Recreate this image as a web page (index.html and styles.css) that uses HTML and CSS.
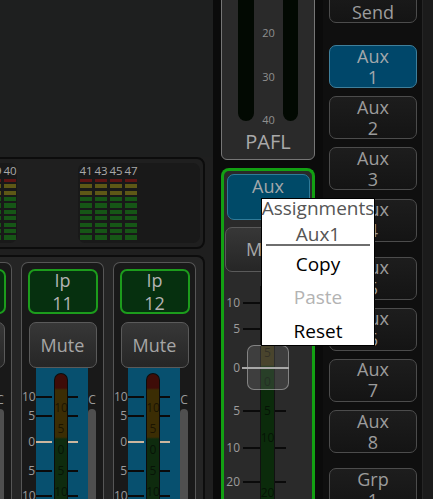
FILE: index.html
```html
<!DOCTYPE html>
<html>
<head>
<meta charset="utf-8">
<link rel="stylesheet" href="styles.css">
</head>
<body>
<div class="app">
  <div class="left">
    <div class="empty"></div>
    <div class="meters">
      <div class="mgroup g1">
        <div class="mcol"><span class="ml">39</span><div class="segs"><i class="sr"></i><i class="sy"></i><i class="sy"></i><i class="sg"></i><i class="sg"></i><i class="sg"></i><i class="sg"></i><i class="sg"></i><i class="sg"></i><i class="sg"></i></div></div>
        <div class="mcol"><span class="ml">40</span><div class="segs"><i class="sr"></i><i class="sy"></i><i class="sy"></i><i class="sg"></i><i class="sg"></i><i class="sg"></i><i class="sg"></i><i class="sg"></i><i class="sg"></i><i class="sg"></i></div></div>
      </div>
      <div class="mgroup g2">
        <div class="mcol"><span class="ml">41</span><div class="segs"><i class="sr"></i><i class="sy"></i><i class="sy"></i><i class="sg"></i><i class="sg"></i><i class="sg"></i><i class="sg"></i><i class="sg"></i><i class="sg"></i><i class="sg"></i></div></div>
        <div class="mcol"><span class="ml">43</span><div class="segs"><i class="sr"></i><i class="sy"></i><i class="sy"></i><i class="sg"></i><i class="sg"></i><i class="sg"></i><i class="sg"></i><i class="sg"></i><i class="sg"></i><i class="sg"></i></div></div>
        <div class="mcol"><span class="ml">45</span><div class="segs"><i class="sr"></i><i class="sy"></i><i class="sy"></i><i class="sg"></i><i class="sg"></i><i class="sg"></i><i class="sg"></i><i class="sg"></i><i class="sg"></i><i class="sg"></i></div></div>
        <div class="mcol"><span class="ml">47</span><div class="segs"><i class="sr"></i><i class="sy"></i><i class="sy"></i><i class="sg"></i><i class="sg"></i><i class="sg"></i><i class="sg"></i><i class="sg"></i><i class="sg"></i><i class="sg"></i></div></div>
      </div>
    </div>
    <div class="chpanel">
      <div class="strip">
        <div class="ipbtn"><span>Ip</span><span>10</span></div>
        <div class="mute">Mute</div>
        <div class="fader">
          <div class="blue"></div>
          <div class="meter"><span class="mn">10</span><span class="mn">5</span><span class="mn">0</span><span class="mn">5</span><span class="mn">10</span></div>
          <div class="pan"><span class="c">C</span><div class="panbar"></div></div>
          <span class="n r2">10</span><i class="tl r2"></i><i class="tr r2"></i>
          <span class="n r4">5</span><i class="tl r4"></i><i class="tr r4"></i>
          <span class="n r6">0</span><i class="tl r6 z"></i><i class="tr r6 z"></i>
          <span class="n r8">5</span><i class="tl r8"></i><i class="tr r8"></i>
          <span class="n r10">10</span><i class="tl r10"></i><i class="tr r10"></i>
        </div>
      </div>
      <div class="strip">
        <div class="ipbtn"><span>Ip</span><span>11</span></div>
        <div class="mute">Mute</div>
        <div class="fader">
          <div class="blue"></div>
          <div class="meter"><span class="mn">10</span><span class="mn">5</span><span class="mn">0</span><span class="mn">5</span><span class="mn">10</span></div>
          <div class="pan"><span class="c">C</span><div class="panbar"></div></div>
          <span class="n r2">10</span><i class="tl r2"></i><i class="tr r2"></i>
          <span class="n r4">5</span><i class="tl r4"></i><i class="tr r4"></i>
          <span class="n r6">0</span><i class="tl r6 z"></i><i class="tr r6 z"></i>
          <span class="n r8">5</span><i class="tl r8"></i><i class="tr r8"></i>
          <span class="n r10">10</span><i class="tl r10"></i><i class="tr r10"></i>
        </div>
      </div>
      <div class="strip">
        <div class="ipbtn"><span>Ip</span><span>12</span></div>
        <div class="mute">Mute</div>
        <div class="fader">
          <div class="blue"></div>
          <div class="meter"><span class="mn">10</span><span class="mn">5</span><span class="mn">0</span><span class="mn">5</span><span class="mn">10</span></div>
          <div class="pan"><span class="c">C</span><div class="panbar"></div></div>
          <span class="n r2">10</span><i class="tl r2"></i><i class="tr r2"></i>
          <span class="n r4">5</span><i class="tl r4"></i><i class="tr r4"></i>
          <span class="n r6">0</span><i class="tl r6 z"></i><i class="tr r6 z"></i>
          <span class="n r8">5</span><i class="tl r8"></i><i class="tr r8"></i>
          <span class="n r10">10</span><i class="tl r10"></i><i class="tr r10"></i>
        </div>
      </div>
    </div>
  </div>

  <div class="sep"></div>

  <div class="mid">
    <div class="pafl">
      <div class="pafl-top">
        <div class="pbar"></div>
        <div class="pscale"><span>20</span><span>30</span><span>40</span></div>
        <div class="pbar pbar2"></div>
      </div>
      <div class="plabel">PAFL</div>
    </div>
    <div class="aux">
      <div class="auxbtn"><span>Aux</span><span>1</span></div>
      <div class="mute amute">Mute</div>
      <div class="afader">
        <div class="ameter"><span class="mn">5</span><span class="mn">0</span><span class="mn">5</span><span class="mn">10</span><span class="mn">20</span></div>
        <span class="an r2">10</span><i class="atl r2"></i><i class="atr r2"></i>
        <span class="an r4">5</span><i class="atl r4"></i><i class="atr r4"></i>
        <span class="an r6">0</span><i class="atl r6 az"></i><i class="atr r6 az"></i>
        <span class="an r8">5</span><i class="atl r8"></i><i class="atr r8"></i>
        <span class="an r10">10</span><i class="atl r10"></i><i class="atr r10"></i>
        <span class="an r12">20</span><i class="atl r12"></i><i class="atr r12"></i>
        <div class="knob"></div>
      </div>
    </div>
  </div>

  <div class="sep"></div>

  <div class="right">
    <div class="btns">
      <div class="rbtn send"><span>Main</span><span>Send</span></div>
      <div class="rbtn active gap22"><span>Aux</span><span>1</span></div>
      <div class="rbtn"><span>Aux</span><span>2</span></div>
      <div class="rbtn"><span>Aux</span><span>3</span></div>
      <div class="rbtn"><span>Aux</span><span>4</span></div>
      <div class="rbtn gap15"><span>Aux</span><span>5</span></div>
      <div class="rbtn"><span>Aux</span><span>6</span></div>
      <div class="rbtn"><span>Aux</span><span>7</span></div>
      <div class="rbtn"><span>Aux</span><span>8</span></div>
      <div class="rbtn gap15"><span>Grp</span><span>1</span></div>
    </div>
    <div class="rail"></div>
  </div>

  <div class="popup">
    <div class="ptitle">Assignments</div>
    <div class="psub">Aux1</div>
    <div class="psep"></div>
    <div class="pitem first">Copy</div>
    <div class="pitem dis">Paste</div>
    <div class="pitem">Reset</div>
  </div>
</div>
</body>
</html>
```

FILE: styles.css
```css
* { box-sizing: border-box; margin: 0; padding: 0; }
html, body { width: 433px; height: 499px; overflow: hidden; background: #0b0b0b; }
body { font-family: "Open Sans", "Noto Sans", sans-serif; }
i { display: block; }

.app { position: relative; display: flex; width: 433px; height: 499px; overflow: hidden; }

/* ---------- left area ---------- */
.left { width: 213px; flex: none; background: #1f1f1f; display: flex; flex-direction: column; overflow: hidden; }
.empty { height: 157px; flex: none; background: #1e1f1f; }

.meters {
  flex: none; height: 92px; width: 225px; margin-left: -20px;
  border: 2px solid #0c0c0c; border-radius: 8px;
  display: flex; gap: 61px; padding: 4px 0 0 2px;
}
.mgroup { height: 80px; background: #191919; border-radius: 7px; display: flex; gap: 3px; }
.g1 { width: 33px; padding-left: 5px; }
.g2 { width: 122px; padding-left: 2px; }
.mcol { width: 12px; display: flex; flex-direction: column; align-items: center; }
.ml { height: 16px; line-height: 16px; font-size: 11.5px; color: #a9a9a9; white-space: nowrap; }
.segs { width: 12px; display: flex; flex-direction: column; gap: 2.3px; }
.segs i { height: 4.1px; }
.segs .sr { height: 3px; background: #5f1414; }
.segs .sy { background: #5e5816; }
.segs .sg { background: #165616; }

.chpanel {
  flex: 1; margin-top: 6px; margin-left: -20px; width: 225px;
  border: 2px solid #0d0d0d; border-bottom: none; border-radius: 8px 8px 0 0;
  background: #252525; display: flex; gap: 9px; padding-top: 5px; overflow: hidden;
}
.strip {
  flex: none; width: 83px; border: 1px solid #565656; border-bottom: none;
  border-radius: 7px 7px 0 0; background: #191919;
  display: flex; flex-direction: column; align-items: center; padding-top: 6px;
}
.strip:first-child { margin-left: -53px; }

.ipbtn {
  width: 70px; height: 45px; flex: none; border: 2px solid #1c9c1c; border-radius: 7px;
  background: #06300f; color: #b3b3b3; font-size: 18px; line-height: 23px;
  display: flex; flex-direction: column; align-items: center; justify-content: center;
}
.mute {
  width: 68px; height: 46px; flex: none; margin-top: 8px;
  border: 1px solid #5a5a5a; border-radius: 7px;
  background: linear-gradient(#373737, #262626);
  color: #a6a6a6; font-size: 18px; line-height: 44px; text-align: center;
}

.fader {
  flex: 1; align-self: stretch; display: grid;
  grid-template-columns: 14px 18px 14px 20px 8px 7px;
  grid-template-rows: 22px 14px 5px 14px 12px 14px 15px 14px 11px 14px 40px;
}
.blue { grid-column: 2 / 5; grid-row: 1 / -1; background: #07506f; }
.meter {
  grid-column: 3; grid-row: 1 / -1; margin-top: 5px;
  border: 1px solid #0c0c0c; border-bottom: none; border-radius: 7px 7px 0 0;
  background: linear-gradient(#3e0c08 0, #3e0c08 14px, #3b2d04 16px, #3b2d04 63px, #0e2b0e 65px);
  display: flex; flex-direction: column; align-items: center; padding-top: 27px; gap: 7px;
}
.mn { font-size: 12px; line-height: 14px; color: rgba(0,0,0,0.55); }
.pan { grid-column: 5; grid-row: 1 / -1; display: flex; flex-direction: column; align-items: center; padding-top: 25px; }
.c { font-size: 12px; line-height: 14px; color: #9a9a9a; }
.panbar { margin-top: 2px; width: 8px; flex: 1; background: #4f4f4f; border-radius: 4px 4px 0 0; }

.n { grid-column: 1; font-size: 12px; line-height: 14px; color: #9c9c9c; text-align: right; padding-right: 1px; }
.tl { grid-column: 2; width: 16px; height: 2px; align-self: center; background: #0a0a0a; }
.tr { grid-column: 4; width: 10px; height: 2px; align-self: center; justify-self: start; background: #0a0a0a; }
.tl.z, .tr.z { background: #cbb69e; }

.r2 { grid-row: 2; } .r4 { grid-row: 4; } .r6 { grid-row: 6; }
.r8 { grid-row: 8; } .r10 { grid-row: 10; } .r12 { grid-row: 12; }

.sep { width: 8px; flex: none; background: #0b0b0b; }

/* ---------- middle ---------- */
.mid { width: 94px; flex: none; display: flex; flex-direction: column; }
.pafl {
  flex: none; margin-top: -10px; height: 170px;
  border: 1px solid #767676; border-radius: 0 0 6px 6px; background: #2a2a2a;
  display: flex; flex-direction: column; align-items: center;
}
.pafl-top { align-self: stretch; height: 130px; display: flex; padding-left: 16px; }
.pbar { width: 16px; height: 130px; background: #020902; border-radius: 0 0 8px 8px; }
.pbar2 { width: 15px; }
.pscale { width: 29px; display: flex; flex-direction: column; align-items: center; padding-top: 36px; gap: 31.5px; }
.pscale span { font-size: 11px; line-height: 12px; color: #8f8f8f; }
.plabel { margin-top: 8px; font-size: 20px; line-height: 26px; color: #a9a9a9; }

.aux {
  flex: 1; margin-top: 8px; border: 3px solid #13a013; border-bottom: none;
  border-radius: 8px 8px 0 0; background: #2a2a2a;
  display: flex; flex-direction: column; align-items: center; padding-top: 3px;
}
.auxbtn {
  width: 83px; height: 46px; flex: none; border: 1px solid #2f7b99; border-radius: 7px;
  background: #004a68; color: #a3a8aa; font-size: 18px; line-height: 22px;
  display: flex; flex-direction: column; align-items: center; justify-content: center;
}
.amute { width: 86px; height: 45px; margin-top: 7px; line-height: 43px; }

.afader {
  position: relative; flex: 1; align-self: stretch; display: grid;
  grid-template-columns: 17px 19px 15px 37px;
  grid-template-rows: 24px 14px 12px 14px 25px 14px 29px 14px 23px 14px 20px 14px 40px;
}
.ameter {
  grid-column: 3; grid-row: 1 / -1; margin-top: 14px;
  border-left: 1px solid #111; border-right: 1px solid #111;
  background: linear-gradient(#3e0c08 0, #3e0c08 12px, #3a3312 14px, #3a3312 79px, #0b2b0b 81px);
  display: flex; flex-direction: column; align-items: center; padding-top: 60px;
}
.ameter .mn:nth-child(2), .ameter .mn:nth-child(3) { margin-top: 15px; }
.ameter .mn:nth-child(4) { margin-top: 13px; }
.ameter .mn:nth-child(5) { margin-top: 41px; }
.an { grid-column: 1; font-size: 12px; line-height: 14px; color: #9c9c9c; text-align: right; padding-right: 1px; }
.atl { grid-column: 2; width: 17px; margin-left: 2px; height: 2px; align-self: center; background: #0a0a0a; }
.atr { grid-column: 4; width: 11px; height: 2px; align-self: center; justify-self: start; background: #0a0a0a; }
.atl.az, .atr.az { background: #a8a8a8; }
.knob {
  position: absolute; left: 23px; top: 73px; width: 42px; height: 45px;
  border: 1px solid rgba(190,190,190,0.55); border-radius: 7px;
  background: rgba(110,110,110,0.3);
}
.knob::before {
  content: ""; position: absolute; left: -6px; top: 21px; width: 47px; height: 2px; background: #a8a8a8;
}

/* ---------- right column ---------- */
.right { flex: 1; display: flex; background: #0f0f0f; }
.btns { width: 99px; flex: none; padding-left: 6px; display: flex; flex-direction: column; }
.rail { flex: 1; background: #1b1b1b; border-left: 1px solid #262626; }
.rbtn {
  width: 88px; height: 43px; flex: none; margin-top: 8.2px;
  border: 1px solid #4c4c4c; border-radius: 7px;
  background: linear-gradient(#1d1d1d, #141414);
  color: #9c9c9c; font-size: 18px; line-height: 21px;
  display: flex; flex-direction: column; align-items: center; justify-content: center;
}
.rbtn.send { margin-top: -20px; }
.rbtn.gap22 { margin-top: 22px; }
.rbtn.gap15 { margin-top: 15px; }
.rbtn.active { background: #00476a; border-color: #3f7f9b; color: #a3a8aa; }

/* ---------- popup ---------- */
.popup {
  position: absolute; left: 261px; top: 198px; width: 114px; height: 148px;
  background: #fff; border: 1px solid #000;
  display: flex; flex-direction: column; align-items: center;
  font-size: 19px;
}
.ptitle { line-height: 18px; color: #555; white-space: nowrap; }
.psub { line-height: 18px; margin-top: 8px; color: #555; }
.psep { width: 104px; height: 2px; margin-top: 1px; background: #6e6e6e; flex: none; }
.pitem { line-height: 33.5px; color: #000; }
.pitem.first { margin-top: 1.5px; }
.pitem.dis { color: #b3b3b3; }
```
